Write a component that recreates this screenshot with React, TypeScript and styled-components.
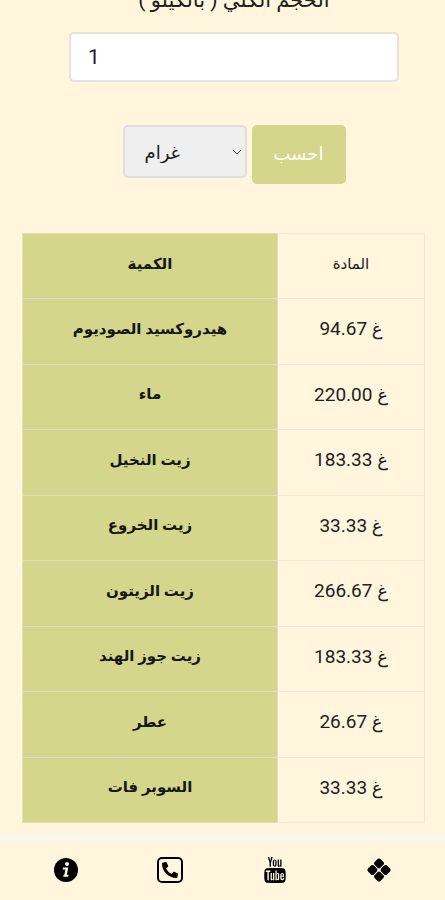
import React from "react";
import styled, { createGlobalStyle } from "styled-components";
import { FaPhoneAlt } from "react-icons/fa";
import { TfiYoutube } from "react-icons/tfi";

const GlobalStyle = createGlobalStyle`
  * { box-sizing: border-box; }
  body {
    margin: 0;
    background: #fff6dd;
    color: #212121;
    font-family: Roboto, "DejaVu Sans", sans-serif;
  }
`;

const Page = styled.div`
  display: flex;
  flex-direction: column;
  height: 100vh;
`;

const Content = styled.main`
  flex: 1;
  min-height: 0;
  overflow-y: auto;
  scrollbar-width: none;
`;

const Form = styled.form`
  display: flex;
  flex-direction: column;
  align-items: center;
  margin-top: -16px;
  padding: 0 46px 0 69px;
`;

const FieldLabel = styled.label`
  height: 32px;
  line-height: 32px;
  margin-bottom: 16px;
  font-size: 21px;
`;

const AmountInput = styled.input`
  width: 100%;
  height: 50px;
  padding: 0 17px;
  border: 2px solid #e6e3dd;
  border-radius: 5px;
  background: #fff;
  color: #212121;
  font: inherit;
  font-size: 21px;
`;

const Actions = styled.div`
  display: flex;
  align-items: flex-start;
  gap: 5px;
  margin-top: 43px;
`;

const SelectBox = styled.div`
  display: grid;
  align-items: center;
  width: 124px;

  > * { grid-area: 1 / 1; }

  > svg {
    justify-self: end;
    margin-right: 5px;
    pointer-events: none;
  }
`;

const UnitSelect = styled.select`
  appearance: none;
  width: 100%;
  height: 53px;
  padding: 2px 20px 0;
  border: 2px solid #e0dedd;
  border-radius: 5px;
  background: #efefef;
  color: #212121;
  font: inherit;
  font-size: 18px;
`;

const SubmitButton = styled.button`
  width: 94px;
  height: 59px;
  padding: 0 0 2px;
  border: 0;
  border-radius: 5px;
  background: #d4d68c;
  color: #fff;
  font: inherit;
  font-size: 18px;
`;

const TableArea = styled.div`
  padding: 49px 20px 14px 22px;
`;

const Table = styled.table`
  width: 100%;
  height: 590px;
  table-layout: fixed;
  border-collapse: collapse;
  text-align: center;
`;

const Row = styled.tr`
  height: 65px;
`;

const NameCell = styled.th`
  padding: 0 0 5px;
  border: 1px solid #dfdec4;
  background: #d4d68c;
  color: #161616;
  font-size: 15px;
  font-weight: 700;
`;

const ValueCell = styled.td`
  padding: 0 0 5px;
  border: 1px solid #eee8da;
  font-size: 19px;
`;

const ValueHeading = styled.th`
  width: 147px;
  padding: 0 0 5px;
  border: 1px solid #eee8da;
  font-size: 15px;
  font-weight: 400;
`;

const Unit = styled.span`
  font-size: 18px;
`;

const TabBar = styled.nav`
  display: flex;
  justify-content: space-around;
  align-items: center;
  height: 64px;
  padding: 0 14px;
  border-top: 4px solid #f9f9f8;
`;

const TabLink = styled.a`
  display: flex;
  justify-content: center;
  align-items: center;
  width: 44px;
  height: 44px;
  color: #000;
`;

const PhoneFrame = styled.span`
  display: flex;
  justify-content: center;
  align-items: center;
  width: 26px;
  height: 26px;
  border: 2px solid #000;
  border-radius: 5px;
`;

const rows = [
  ["هيدروكسيد الصوديوم", "94.67"],
  ["ماء", "220.00"],
  ["زيت النخيل", "183.33"],
  ["زيت الخروع", "33.33"],
  ["زيت الزيتون", "266.67"],
  ["زيت جوز الهند", "183.33"],
  ["عطر", "26.67"],
  ["السوبر فات", "33.33"],
];

function Chevron() {
  return (
    <svg width="10" height="8" viewBox="0 0 10 8" fill="none" stroke="#444" aria-hidden="true">
      <path d="M1 2l4 4 4-4" />
    </svg>
  );
}

function InfoIcon() {
  return (
    <svg width="24" height="24" viewBox="0 0 24 24" aria-hidden="true">
      <circle cx="12" cy="12" r="12" />
      <circle cx="13" cy="6" r="2" fill="#fff6dd" />
      <path
        d="M9 9.6h5.2l-1.3 7.2h1.7l-.4 1.9H9.2l.4-1.9h.8l.9-5.3H8.7z"
        fill="#fff6dd"
      />
    </svg>
  );
}

function DiamondsIcon() {
  return (
    <svg width="24" height="24" viewBox="0 0 24 24" aria-hidden="true">
      <g transform="rotate(45 12 12)">
        <rect x="3.2" y="3.2" width="8.3" height="8.3" rx="2.4" />
        <rect x="12.5" y="3.2" width="8.3" height="8.3" rx="2.4" />
        <rect x="3.2" y="12.5" width="8.3" height="8.3" rx="2.4" />
        <rect x="12.5" y="12.5" width="8.3" height="8.3" rx="2.4" />
      </g>
    </svg>
  );
}

export default function App() {
  return (
    <Page>
      <GlobalStyle />
      <Content>
        <Form onSubmit={(e) => e.preventDefault()}>
          <FieldLabel htmlFor="amount" dir="rtl">الحجم الكلي ( بالكيلو )</FieldLabel>
          <AmountInput id="amount" type="text" inputMode="decimal" defaultValue="1" />
          <Actions>
            <SelectBox>
              <UnitSelect aria-label="الوحدة" defaultValue="g">
                <option value="g">غرام</option>
              </UnitSelect>
              <Chevron />
            </SelectBox>
            <SubmitButton type="submit">احسب</SubmitButton>
          </Actions>
        </Form>
        <TableArea>
          <Table>
            <thead>
              <Row>
                <NameCell scope="col">الكمية</NameCell>
                <ValueHeading scope="col">المادة</ValueHeading>
              </Row>
            </thead>
            <tbody>
              {rows.map(([name, value]) => (
                <Row key={name}>
                  <NameCell scope="row">{name}</NameCell>
                  <ValueCell>{value} <Unit>غ</Unit></ValueCell>
                </Row>
              ))}
            </tbody>
          </Table>
        </TableArea>
      </Content>
      <TabBar>
        <TabLink href="#info" aria-label="معلومات"><InfoIcon /></TabLink>
        <TabLink href="#phone" aria-label="هاتف">
          <PhoneFrame><FaPhoneAlt size={16} /></PhoneFrame>
        </TabLink>
        <TabLink href="#youtube" aria-label="يوتيوب"><TfiYoutube size={26} /></TabLink>
        <TabLink href="#more" aria-label="المزيد"><DiamondsIcon /></TabLink>
      </TabBar>
    </Page>
  );
}
